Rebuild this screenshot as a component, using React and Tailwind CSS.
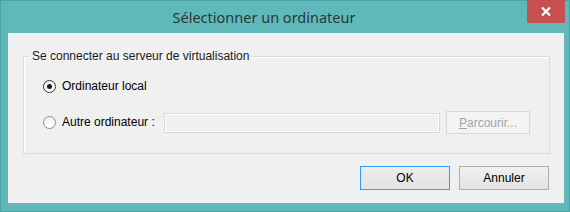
import React from "react";

function Radio({ checked }) {
  return (
    <span
      className={
        "relative flex h-[13px] w-[13px] shrink-0 items-center justify-center rounded-full border bg-gradient-to-b from-[#f2f2f2] to-white " +
        (checked ? "border-[#333333]" : "border-[#8c8c8c]")
      }
    >
      {checked ? <span className="h-[5px] w-[5px] rounded-full bg-[#1a1a1a]" /> : null}
    </span>
  );
}

export default function App() {
  return (
    <div
      className="flex h-[212px] w-[570px] flex-col border border-[#4aa2a4] bg-[#5fb9bb]"
      style={{ fontFamily: '"Liberation Sans", Arial, sans-serif' }}
    >
      {/* title bar */}
      <div className="flex h-[32px] shrink-0 items-start">
        <div className="flex h-[32px] flex-1 items-center justify-center">
          <span
            className="text-[14.5px] leading-none text-[#2a3838]"
            style={{ fontFamily: '"Noto Sans", "Open Sans", sans-serif' }}
          >
            Sélectionner un ordinateur
          </span>
        </div>
        <div className="-mt-px mr-[4px] flex h-[23px] w-[38px] items-center justify-center bg-[#c75050]">
          <svg width="10" height="9" viewBox="0 0 10 9">
            <path d="M1 0.5 L9 8.5 M9 0.5 L1 8.5" stroke="white" strokeWidth="2.2" />
          </svg>
        </div>
      </div>

      {/* client area */}
      <div className="ml-[7px] mr-[5px] flex h-[170px] flex-col bg-[#f0f0f0] px-[15px] pt-[16px] text-[12px] text-black">
        <fieldset className="border border-[#dcdcdc] px-[19px] pb-[19px] pt-[17px] shadow-[inset_1px_1px_0_#ffffff]">
          <legend className="ml-[-13px] px-[2px] leading-[14px] text-[#1a1a1a]">
            Se connecter au serveur de virtualisation
          </legend>
          <div className="flex h-[13px] items-center gap-[6px]">
            <Radio checked />
            <span className="leading-[13px]">Ordinateur local</span>
          </div>
          <div className="mt-[18px] flex h-[23px] items-center">
            <div className="flex w-[121px] items-center gap-[6px]">
              <Radio />
              <span className="leading-[13px]">Autre ordinateur :</span>
            </div>
            <div className="h-[20px] w-[276px] border border-[#d9d9d9] bg-[#f0f0f0] shadow-[inset_0_0_0_1px_#ffffff]" />
            <div className="ml-[6px] flex h-[23px] w-[84px] items-center justify-center border border-[#d9d9d9] bg-[#f4f4f4] text-[#a3a3a3]">
              <span>
                <span className="underline">P</span>arcourir...
              </span>
            </div>
          </div>
        </fieldset>

        <div className="mt-[12px] flex justify-end gap-[9px]">
          <div className="flex h-[24px] w-[90px] items-center justify-center border border-[#3399ff] bg-gradient-to-b from-[#ededed] to-[#e3e3e3]">
            OK
          </div>
          <div className="flex h-[24px] w-[90px] items-center justify-center border border-[#adadad] bg-gradient-to-b from-[#f0f0f0] to-[#e3e3e3]">
            Annuler
          </div>
        </div>
      </div>
    </div>
  );
}
